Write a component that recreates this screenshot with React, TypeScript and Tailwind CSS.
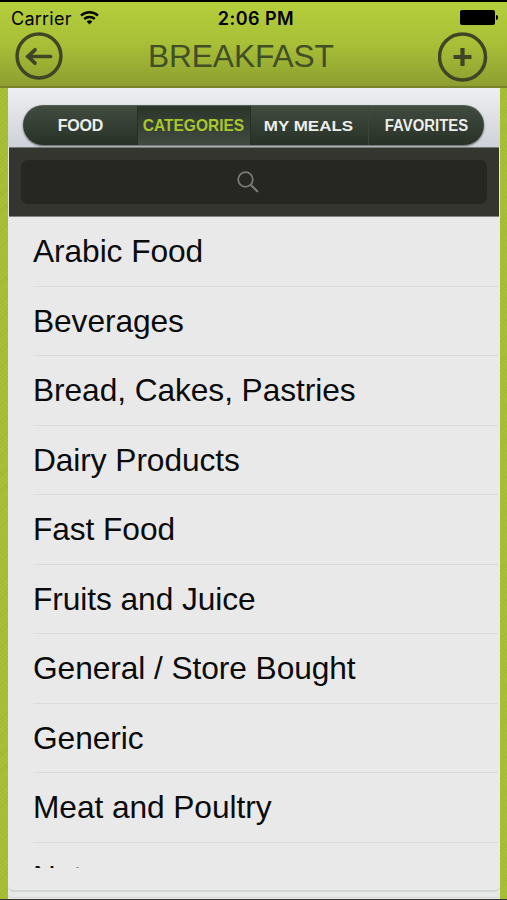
const categories = [
  'Arabic Food',
  'Beverages',
  'Bread, Cakes, Pastries',
  'Dairy Products',
  'Fast Food',
  'Fruits and Juice',
  'General / Store Bought',
  'Generic',
  'Meat and Poultry',
];

function StatusBar() {
  return (
    <div className="grid h-[31px] grid-cols-3 items-center px-[11px] pt-[2px] font-['Inter',sans-serif] text-black">
      <div className="flex items-center gap-[8px]">
        <span className="text-[18px] leading-[30px] tracking-[0.25px]">Carrier</span>
        <svg width="19" height="15" viewBox="0 0 19 15" fill="none" stroke="#050a00" strokeWidth="2.5" className="-mt-[3px]">
          <path d="M1 5.6a12.3 12.3 0 0 1 17 0" />
          <path d="M4.2 9a7.7 7.7 0 0 1 10.6 0" />
          <path d="M9.5 14.5 6.6 11.6a4.2 4.2 0 0 1 5.8 0Z" fill="#050a00" stroke="none" />
        </svg>
      </div>
      <div className="flex justify-center pl-[6px]">
        <span className="-ml-[1px] text-[18px] leading-[28px] font-semibold tracking-[0.45px] whitespace-nowrap">2:06 PM</span>
      </div>
      <div className="-mt-[3px] -mr-[2px] flex items-center justify-end gap-[1px]">
        <div className="h-[15px] w-[35px] rounded-[2px] bg-black" />
        <div className="h-[5px] w-[2px] rounded-r-full bg-black" />
      </div>
    </div>
  );
}

function Header() {
  return (
    <header className="h-[88px] border-t-2 border-b-2 border-t-black border-b-[#78832a] bg-linear-to-b from-[#b4cf3b] via-[#a8bf37] to-[#8d9f30]">
      <StatusBar />
      <div className="flex h-[48px] items-center pr-[19px] pl-[14px]">
        <svg width="50" height="50" viewBox="0 0 50 50" fill="none" stroke="#414525" className="mt-[-2px]">
          <circle cx="25" cy="25" r="21.9" strokeWidth="3.5" />
          <path d="M14 25.5H36.5" strokeWidth="3.7" strokeLinecap="round" />
          <path d="m21 18.8-7 6.7 7 6.7" strokeWidth="3.7" strokeLinecap="round" />
        </svg>
        <h1 className="-mt-[2px] ml-[84px] text-[31.7px] leading-[40px] tracking-[-0.1px] text-[#414f27]">BREAKFAST</h1>
        <svg width="50" height="50" viewBox="0 0 50 50" fill="none" stroke="#414525" className="ml-auto">
          <circle cx="24.5" cy="25" r="23" strokeWidth="3.5" />
          <path d="M15.5 25h18M24.5 16v18" strokeWidth="4.2" />
        </svg>
      </div>
    </header>
  );
}

function Tabs() {
  return (
    <div className="h-[59px] bg-linear-to-b from-[#eeeff1] to-[#ced1d8] pt-[17px] pl-[15px]">
      <div className="flex h-[40px] w-[461px] overflow-hidden rounded-[20px] border-t border-[#546052] bg-linear-to-b from-[#414b40] via-[#343e33] to-[#283126] leading-[39px] whitespace-nowrap text-[#eeeeea] shadow-[0_1px_2px_#555a58]">
        <div className="flex w-[115px] justify-center border-r border-[#273025] text-[16px] font-bold">
          <span className="translate-x-[0.5px] scale-y-[1.04] tracking-[-0.2px]">FOOD</span>
        </div>
        <div className="flex w-[112px] justify-center bg-linear-to-b from-[#2c352b] to-[#424b40] text-[15.5px] font-bold text-[#a9c62e]">
          <span className="-translate-x-[0.5px] scale-y-[1.08]">CATEGORIES</span>
        </div>
        <div className="flex w-[118px] justify-center border-l border-[#273025] text-[17px] font-bold">
          <span className="-translate-x-[1px] translate-y-[1px] scale-y-[0.88]">MY MEALS</span>
        </div>
        <div className="flex w-[116px] justify-center border-l border-[#3c473a] text-[14.9px] font-bold">
          <span className="translate-y-[0.5px] scale-y-110">FAVORITES</span>
        </div>
      </div>
    </div>
  );
}

function SearchBar() {
  return (
    <div className="mr-px ml-px h-[70px] border-t border-b border-t-[#777975] border-b-[#82837f] bg-[#353530] px-[12px] pt-[12px]">
      <div className="flex h-[44px] items-center justify-center rounded-[7px] bg-[#262623]">
        <svg width="22" height="22" viewBox="0 0 22 22" fill="none" stroke="#7b7b76" className="mr-[13px]">
          <circle cx="8.5" cy="8.5" r="7.3" strokeWidth="1.7" />
          <path d="m14 14 6.2 6.2" strokeWidth="2.2" strokeLinecap="round" />
        </svg>
      </div>
    </div>
  );
}

function CategoryList() {
  return (
    <ul className="mr-[2px] h-[651px] overflow-hidden pl-[25px] text-[31.7px] tracking-[-0.07px] text-[#0b0b0b]">
      {categories.map((name) => (
        <li key={name} className="h-[69.5px] border-b border-[#dadbdb] leading-[68px] whitespace-nowrap">
          {name}
        </li>
      ))}
      <li className="leading-[68px] whitespace-nowrap">Nuts</li>
    </ul>
  );
}

export default function App() {
  return (
    <div className="flex h-[900px] w-[507px] flex-col overflow-hidden bg-[#a5bd34] font-['Liberation_Sans',Arial,sans-serif]">
      <Header />
      <div className="flex flex-1 border-b border-[#343434] bg-[repeating-linear-gradient(135deg,#a8bf36_0px,#a8bf36_2px,#a2b934_2px,#a2b934_3px)] pr-[7px] pl-[8px]">
        <main className="flex flex-1 flex-col bg-[#e6e7e7]">
          <Tabs />
          <SearchBar />
          <div className="h-[675px] rounded-b-[6px] border-b-2 border-[#d2d3d3] bg-[#e9e9e9]">
            <CategoryList />
          </div>
          <div className="h-[6px] rounded-b-[4px] border-b border-[#d5d6d6]" />
        </main>
      </div>
    </div>
  );
}
